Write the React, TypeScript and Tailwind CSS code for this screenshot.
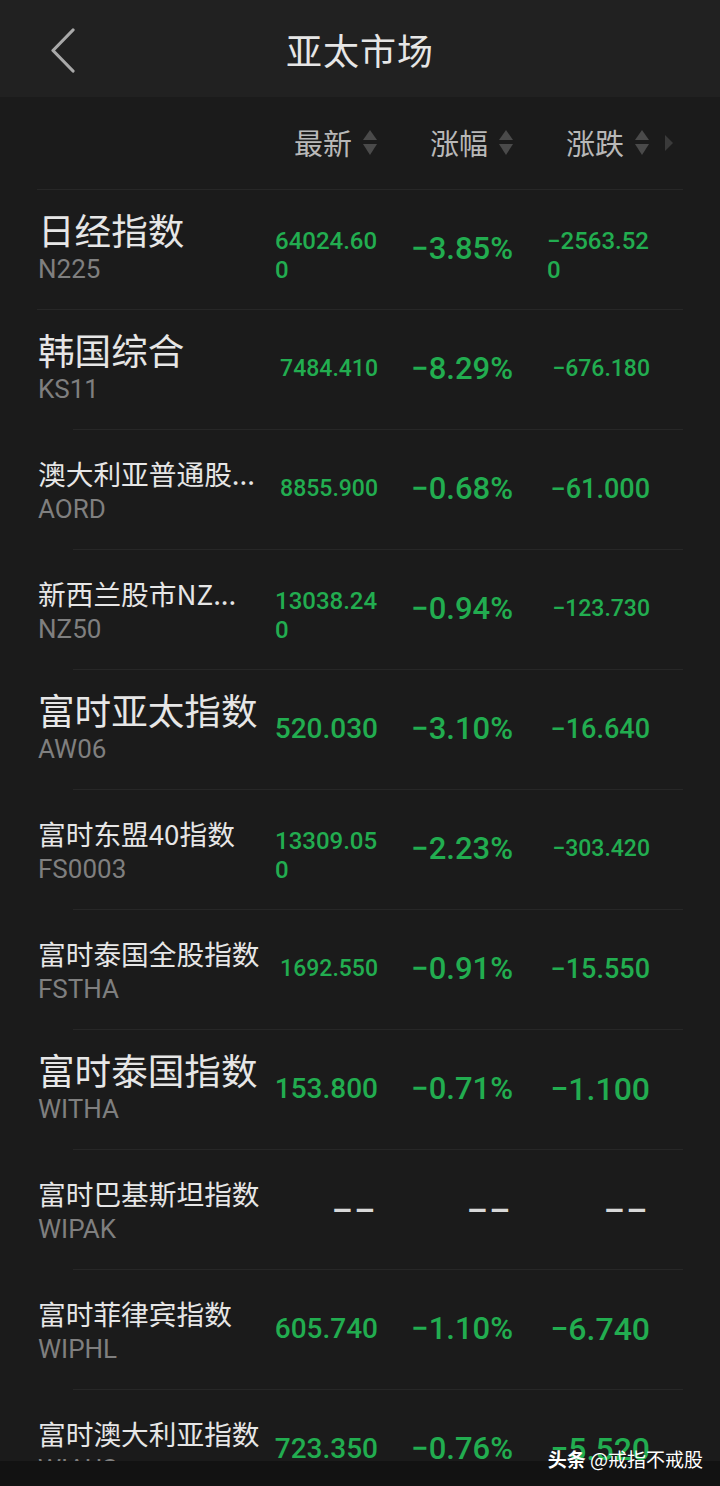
import React from 'react';

interface Row {
    name: string;
    code: string;
    big?: boolean;
    last: string;
    lastSize: number;
    pct: string;
    chg: string;
    chgSize: number;
}

const rows: Row[] = [
    { name: '日经指数', code: 'N225', big: true, last: '64024.600', lastSize: 24, pct: '−3.85%', chg: '−2563.520', chgSize: 24 },
    { name: '韩国综合', code: 'KS11', big: true, last: '7484.410', lastSize: 23, pct: '−8.29%', chg: '−676.180', chgSize: 23 },
    { name: '澳大利亚普通股...', code: 'AORD', last: '8855.900', lastSize: 23, pct: '−0.68%', chg: '−61.000', chgSize: 27 },
    { name: '新西兰股市NZ...', code: 'NZ50', last: '13038.240', lastSize: 24, pct: '−0.94%', chg: '−123.730', chgSize: 23 },
    { name: '富时亚太指数', code: 'AW06', big: true, last: '520.030', lastSize: 28, pct: '−3.10%', chg: '−16.640', chgSize: 27 },
    { name: '富时东盟40指数', code: 'FS0003', last: '13309.050', lastSize: 24, pct: '−2.23%', chg: '−303.420', chgSize: 23 },
    { name: '富时泰国全股指数', code: 'FSTHA', last: '1692.550', lastSize: 23, pct: '−0.91%', chg: '−15.550', chgSize: 27 },
    { name: '富时泰国指数', code: 'WITHA', big: true, last: '153.800', lastSize: 28, pct: '−0.71%', chg: '−1.100', chgSize: 32 },
    { name: '富时巴基斯坦指数', code: 'WIPAK', last: '--', lastSize: 0, pct: '--', chg: '--', chgSize: 0 },
    { name: '富时菲律宾指数', code: 'WIPHL', last: '605.740', lastSize: 28, pct: '−1.10%', chg: '−6.740', chgSize: 32 },
    { name: '富时澳大利亚指数', code: 'WIAUS', last: '723.350', lastSize: 28, pct: '−0.76%', chg: '−5.520', chgSize: 32 },
];

const cjk = { fontFamily: '"Noto Sans CJK SC", "Noto Sans", sans-serif' };
const num = { fontFamily: 'Roboto, "Liberation Sans", sans-serif' };

// up/down sort arrows next to column labels
const SortArrows = () => (
    <svg width="16" height="28" viewBox="0 0 16 28" className="ml-[10px]">
        <path d="M8 1 L15 11 L1 11 Z" fill="#4a4a4a" />
        <path d="M1 15 L15 15 L8 26 Z" fill="#4a4a4a" />
    </svg>
);

const Dash = () => (
    <span className="text-[33px] font-bold tracking-[4px] text-[#d8d8d8] leading-none -mt-[4px]" style={{ fontFamily: '"Liberation Sans", sans-serif' }}>
        ––
    </span>
);

const Cell = ({ text, size }: { text: string; size: number }) => {
    if (text === '--') return <Dash />;
    // long values in the small size wrap their last digit onto a second line
    const wraps = text.length > 8 && size <= 24;
    return (
        <span
            className={`text-[#22ad50] font-medium text-left ${wraps ? 'break-all mt-[14px]' : 'whitespace-nowrap'}`}
            style={{ ...num, fontSize: size, lineHeight: wraps ? '29px' : '1.2' }}
        >
            {text}
        </span>
    );
};

export default function App() {
    return (
        <div className="relative w-[720px] h-[1486px] overflow-hidden bg-[#1b1b1b]">
            {/* title bar */}
            <div className="h-[97px] bg-[#212121] flex items-center justify-center relative">
                <svg width="30" height="46" viewBox="0 0 30 46" className="absolute left-[48px] top-[28px]">
                    <path d="M25 2 L5 22.5 L25 43" stroke="#a9a9a9" strokeWidth="3.2" fill="none" strokeLinecap="round" strokeLinejoin="round" />
                </svg>
                <span className="text-[36px] text-[#e6e6e6] tracking-[1px]" style={cjk}>亚太市场</span>
            </div>

            {/* column header */}
            <div className="h-[92px] flex items-center pl-[38px]" style={cjk}>
                <div className="w-[237px]" />
                <div className="w-[103px] flex items-center justify-end text-[29px] text-[#b8b8b8]">
                    <span>最新</span>
                    <SortArrows />
                </div>
                <div className="w-[136px] flex items-center justify-end text-[29px] text-[#b8b8b8]">
                    <span>涨幅</span>
                    <SortArrows />
                </div>
                <div className="w-[136px] flex items-center justify-end text-[29px] text-[#b8b8b8]">
                    <span>涨跌</span>
                    <SortArrows />
                </div>
                <svg width="10" height="18" viewBox="0 0 10 18" className="ml-[14px]">
                    <path d="M1 1 L9 9 L1 17 Z" fill="#3a3a3a" />
                </svg>
            </div>

            {rows.map((r, i) => (
                <div key={r.code} className="relative h-[120px] flex items-center pl-[38px] pr-[70px]">
                    <div className={`absolute top-0 right-[37px] h-px bg-[#272727] ${i < 2 ? 'left-[37px]' : 'left-[73px]'}`} />
                    <div className={`w-[237px] flex flex-col ${r.big ? '' : 'pt-[6px]'}`}>
                        <span
                            className="text-[#e6e6e6] whitespace-nowrap"
                            style={{ ...cjk, fontSize: r.big ? 36.6 : 27.7, lineHeight: r.big ? '40px' : '34px' }}
                        >
                            {r.name}
                        </span>
                        <span
                            className="text-[#7f7f7f] text-[26px]"
                            style={{ ...num, lineHeight: '38px' }}
                        >
                            {r.code}
                        </span>
                    </div>
                    <div className="w-[103px] flex justify-end">
                        <Cell text={r.last} size={r.lastSize} />
                    </div>
                    <div className="w-[135px] flex justify-end">
                        {r.pct === '--' ? <Dash /> : (
                            <span className="text-[#22ad50] font-medium text-[31px] leading-[1.2]" style={num}>{r.pct}</span>
                        )}
                    </div>
                    <div className="w-[137px] flex justify-end">
                        <div className="max-w-[103px] flex">
                            <Cell text={r.chg} size={r.chgSize} />
                        </div>
                    </div>
                </div>
            ))}

            {/* bottom bar with watermark */}
            <div className="absolute left-0 right-0 bottom-0 h-[25px] bg-[#121212]" />
            <div className="absolute right-[17px] bottom-[16px] text-[19px] leading-[22px] text-white whitespace-nowrap" style={cjk}>
                <span className="font-bold">头条</span> @戒指不戒股
            </div>
        </div>
    );
}
